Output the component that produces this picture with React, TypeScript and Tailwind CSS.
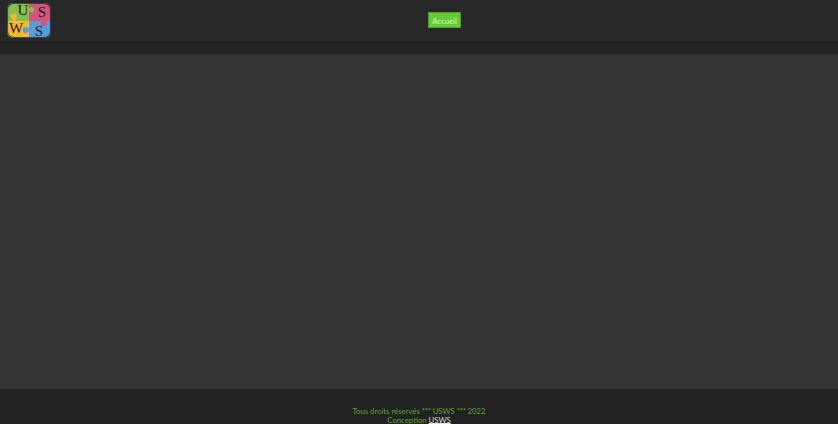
import React from 'react';

const Logo: React.FC = () => (
  <svg width="44" height="35" viewBox="0 0 44 35" className="block overflow-visible">
    <defs>
      <clipPath id="logo-clip">
        <rect x="0" y="0" width="44" height="35" rx="6" />
      </clipPath>
    </defs>
    <g clipPath="url(#logo-clip)">
      <rect x="0" y="0" width="22" height="18" fill="#86c04c" />
      <rect x="22" y="0" width="22" height="18" fill="#d4557c" />
      <rect x="0" y="18" width="22" height="17" fill="#f4b92c" />
      <rect x="22" y="18" width="22" height="17" fill="#5a9cd6" />
      {/* puzzle tabs */}
      <rect x="5.5" y="14" width="3" height="5" fill="#f4b92c" />
      <circle cx="7" cy="13.5" r="3" fill="#f4b92c" />
      <rect x="20" y="5" width="3" height="3" fill="#86c04c" />
      <circle cx="24.5" cy="6.5" r="2.6" fill="#86c04c" />
      <rect x="35.5" y="16" width="3" height="3" fill="#d4557c" />
      <circle cx="37" cy="20" r="3" fill="#d4557c" />
      <rect x="20" y="25.5" width="3" height="3" fill="#5a9cd6" />
      <circle cx="18.5" cy="27" r="3" fill="#5a9cd6" />
    </g>
    <rect x="0.5" y="0.5" width="43" height="34" rx="6" fill="none" stroke="#16303d" strokeOpacity="0.8" strokeWidth="1.2" />
    <g fontFamily="'Liberation Serif', serif" fill="#1c1c1c" fontSize="15" textAnchor="middle">
      <text x="16" y="12">U</text>
      <text x="35" y="14">S</text>
      <text x="9" y="30">W</text>
      <text x="32" y="33">S</text>
    </g>
  </svg>
);

export default function App() {
  return (
    <div className="flex h-[424px] flex-col overflow-hidden bg-[#333333] font-['Lato','Liberation_Sans',sans-serif]">
      <header className="flex h-[41px] items-start bg-[#282828]">
        <div className="ml-[7px] mt-[3px]">
          <Logo />
        </div>
        <nav className="ml-[377px] mt-[12px]">
          <a className="block h-[16px] w-[33px] border border-[#4f9a2c] bg-[#66cc33] text-center text-[7.75px] leading-[16px] text-[#dff0d5]">
            Accueil
          </a>
        </nav>
      </header>
      <div className="h-[13px] bg-[#222222]" />
      <main className="flex-1 bg-[#333333]" />
      <footer className="flex h-[35px] flex-col items-center justify-end bg-[#222222] text-[7.75px] leading-[9px] text-[#5aa82d]">
        <p>
          Tous droits réservés <span className="tracking-[-0.33px]">***</span> USWS <span className="tracking-[-0.33px]">***</span> 2022
        </p>
        <p className="-mb-px">
          Conception <a className="text-[#dddddd] underline underline-offset-0">USWS</a>
        </p>
      </footer>
    </div>
  );
}
